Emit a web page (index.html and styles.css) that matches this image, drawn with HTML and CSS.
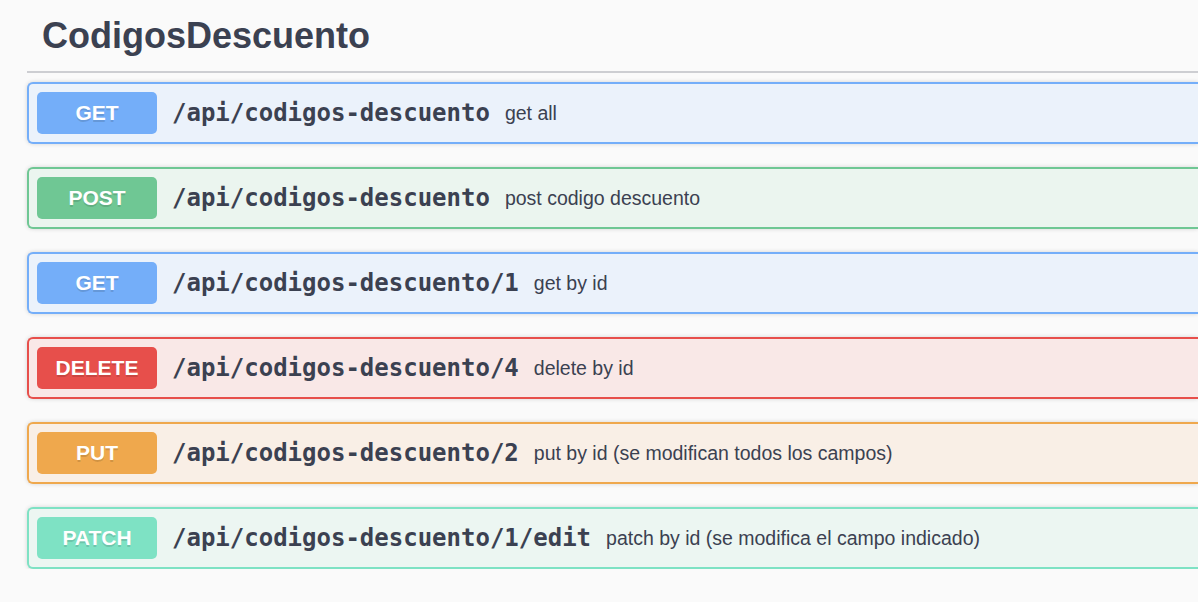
FILE: index.html
```html
<!DOCTYPE html>
<html lang="es">
<head>
<meta charset="utf-8">
<title>CodigosDescuento</title>
<link rel="stylesheet" href="styles.css">
</head>
<body>
<div class="wrapper">
  <section class="tag-section">
    <h4 class="tag-title">CodigosDescuento</h4>
    <div class="ops">
      <div class="opblock get">
        <span class="method">GET</span>
        <span class="path">/api/codigos-descuento</span>
        <span class="desc">get all</span>
      </div>
      <div class="opblock post">
        <span class="method">POST</span>
        <span class="path">/api/codigos-descuento</span>
        <span class="desc">post codigo descuento</span>
      </div>
      <div class="opblock get">
        <span class="method">GET</span>
        <span class="path">/api/codigos-descuento/1</span>
        <span class="desc">get by id</span>
      </div>
      <div class="opblock delete">
        <span class="method">DELETE</span>
        <span class="path">/api/codigos-descuento/4</span>
        <span class="desc">delete by id</span>
      </div>
      <div class="opblock put">
        <span class="method">PUT</span>
        <span class="path">/api/codigos-descuento/2</span>
        <span class="desc">put by id (se modifican todos los campos)</span>
      </div>
      <div class="opblock patch">
        <span class="method">PATCH</span>
        <span class="path">/api/codigos-descuento/1/edit</span>
        <span class="desc">patch by id (se modifica el campo indicado)</span>
      </div>
    </div>
  </section>
</div>
</body>
</html>
```

FILE: styles.css
```css
html, body {
  margin: 0;
  padding: 0;
  background: #fafafa;
}

body {
  font-family: "Liberation Sans", Arial, sans-serif;
  color: #3b4151;
}

.wrapper {
  padding-left: 27px;
}

.tag-title {
  margin: 0 0 9px;
  padding: 15px 30px 15px 15px;
  font-size: 36px;
  line-height: 41px;
  font-weight: 700;
  color: #3b4151;
  border-bottom: 2px solid #cdced2;
}

.ops {
  display: flex;
  flex-direction: column;
  gap: 23px;
}

.opblock {
  display: flex;
  align-items: center;
  padding: 8px;
  border: 2px solid;
  border-right-width: 0;
  border-radius: 6px 0 0 6px;
  box-shadow: 0 0 4px rgba(0, 0, 0, 0.16);
}

.method {
  flex: none;
  width: 120px;
  height: 42px;
  display: flex;
  align-items: center;
  justify-content: center;
  border-radius: 5px;
  color: #fff;
  font-size: 21px;
  font-weight: 700;
  text-shadow: 0 1.5px 0 rgba(0, 0, 0, 0.12);
}

.path {
  padding: 0 15px;
  font-family: "DejaVu Sans Mono", "Liberation Mono", monospace;
  font-size: 24px;
  font-weight: 700;
  color: #3b4151;
  white-space: nowrap;
}

.desc {
  font-size: 19.5px;
  color: #3b4151;
  white-space: nowrap;
}

.get { background: #ebf2fb; border-color: #74aef9; }
.get .method { background: #74aef9; }

.post { background: #ebf5ef; border-color: #6fc794; }
.post .method { background: #6fc794; }

.delete { background: #f9e8e7; border-color: #e74f4b; }
.delete .method { background: #e74f4b; }

.put { background: #f9efe6; border-color: #efa84d; }
.put .method { background: #efa84d; }

.patch { background: #ecf6f2; border-color: #7ee2c4; }
.patch .method { background: #7ee2c4; }
```
